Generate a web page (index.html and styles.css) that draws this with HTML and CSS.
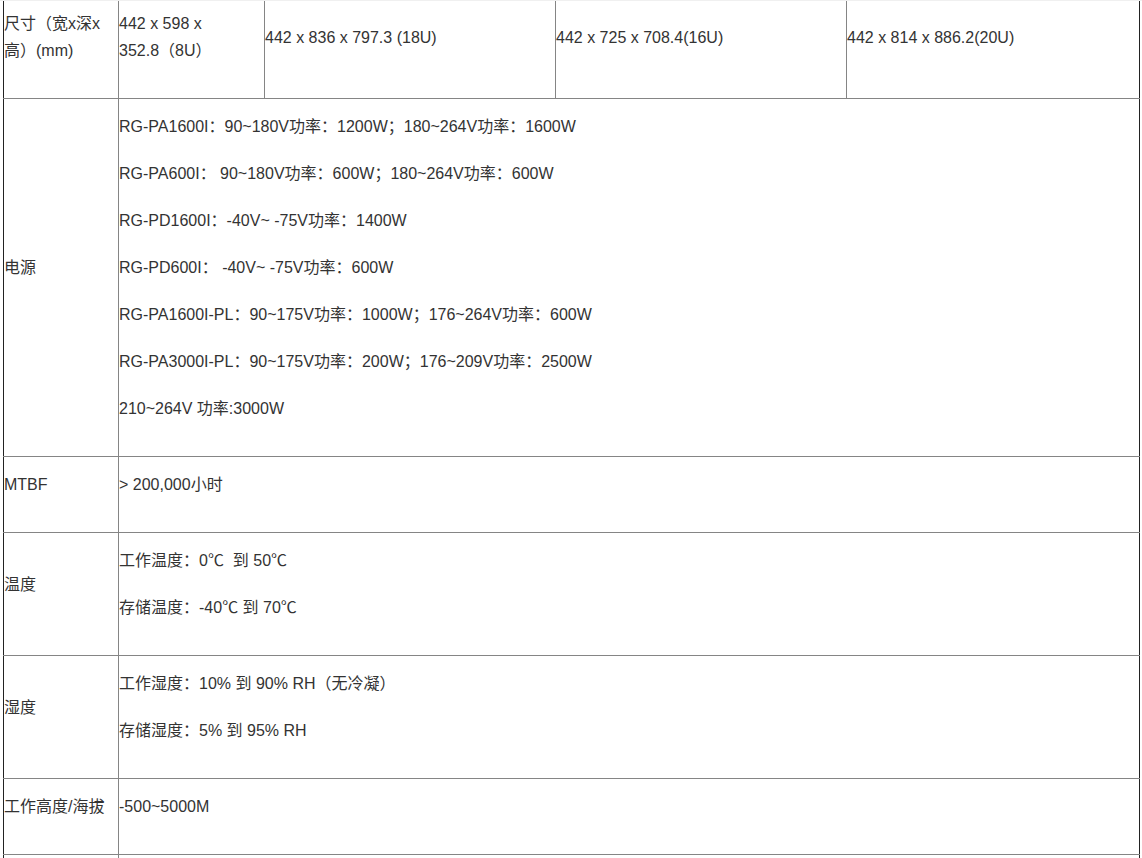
FILE: index.html
```html
<!DOCTYPE html>
<html lang="zh-CN">
<head>
    <meta charset="UTF-8">
    <meta name="viewport" content="width=device-width, initial-scale=1.0">
    <title>产品规格</title>
    <link rel="stylesheet" href="styles.css">
</head>
<body>
    <table class="specs">
        <colgroup>
            <col class="col-label">
            <col class="col-a">
            <col class="col-b">
            <col class="col-c">
            <col class="col-d">
        </colgroup>
        <tr>
            <td><p>尺寸（宽x深x高）(mm)</p></td>
            <td><p>442 x 598 x <span class="nowrap">352.8（8U）</span></p></td>
            <td><p>442 x 836 x 797.3 (18U)</p></td>
            <td><p>442 x 725 x 708.4(16U)</p></td>
            <td><p>442 x 814 x 886.2(20U)</p></td>
        </tr>
        <tr>
            <td><p>电源</p></td>
            <td colspan="4">
                <p>RG-PA1600I：90~180V功率：1200W；180~264V功率：1600W</p>
                <p>RG-PA600I： 90~180V功率：600W；180~264V功率：600W</p>
                <p>RG-PD1600I：-40V~ -75V功率：1400W</p>
                <p>RG-PD600I： -40V~ -75V功率：600W</p>
                <p>RG-PA1600I-PL：90~175V功率：1000W；176~264V功率：600W</p>
                <p>RG-PA3000I-PL：90~175V功率：200W；176~209V功率：2500W</p>
                <p>210~264V 功率:3000W</p>
            </td>
        </tr>
        <tr>
            <td><p>MTBF</p></td>
            <td colspan="4"><p>&gt; 200,000小时</p></td>
        </tr>
        <tr>
            <td><p>温度</p></td>
            <td colspan="4">
                <p>工作温度：0℃&nbsp; 到 50℃</p>
                <p>存储温度：-40℃ 到 70℃</p>
            </td>
        </tr>
        <tr>
            <td><p>湿度</p></td>
            <td colspan="4">
                <p>工作湿度：10% 到 90% RH（无冷凝）</p>
                <p>存储湿度：5% 到 95% RH</p>
            </td>
        </tr>
        <tr>
            <td><p>工作高度/海拔</p></td>
            <td colspan="4"><p>-500~5000M</p></td>
        </tr>
        <tr>
            <td><p>&nbsp;</p></td>
            <td colspan="4"><p>&nbsp;</p></td>
        </tr>
    </table>
</body>
</html>
```

FILE: styles.css
```css
* {
    box-sizing: border-box;
}

body {
    margin: 0;
    background: #fff;
    color: #333;
    font-family: "Liberation Sans", Arial, "Noto Sans CJK SC", sans-serif;
    font-size: 16px;
}

body::before {
    content: "";
    position: fixed;
    top: 0;
    left: 0;
    right: 0;
    height: 1px;
    background: #f0f0f0;
    z-index: 2;
}

.specs {
    width: 1136px;
    margin: -5px 0 0 3px;
    border-collapse: collapse;
    table-layout: fixed;
}

.col-label { width: 115px; }
.col-a { width: 146px; }
.col-b { width: 291px; }
.col-c { width: 291px; }
.col-d { width: 293px; }

.specs td {
    border: 1px solid #858585;
    padding: 14px 0;
    vertical-align: middle;
}

.specs td:first-child {
    border-left-color: #222;
}

.specs td:last-child {
    border-right-color: #222;
}

.specs p {
    margin: 0 0 20px;
    line-height: 27px;
}

.nowrap {
    white-space: nowrap;
}
```
